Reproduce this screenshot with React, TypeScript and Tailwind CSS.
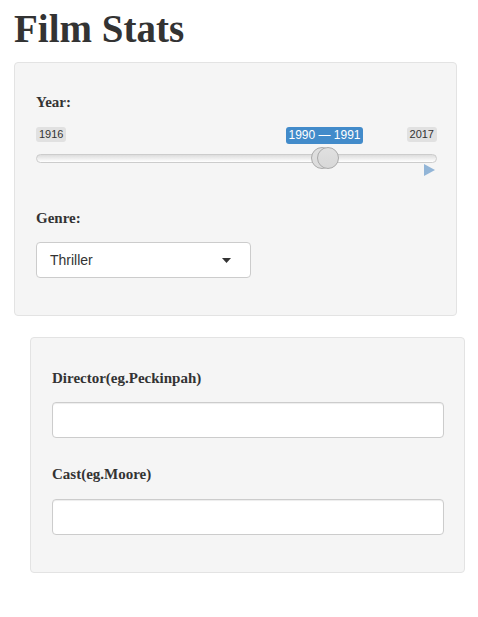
import React from "react";

const serif = "font-['Liberation_Serif',_'Times_New_Roman',_serif]";
const sans = "font-['Liberation_Sans',_Arial,_sans-serif]";

function YearSlider() {
    return (
        <div className={`relative h-[50px] w-full ${sans}`}>
            {/* min / max */}
            <span className="absolute left-0 top-0 rounded-[3px] bg-[#e1e1e1] px-[3px] py-[1px] text-[11px] leading-[13px] text-[#333]">
                1916
            </span>
            <span className="absolute right-0 top-0 rounded-[3px] bg-[#e1e1e1] px-[3px] py-[1px] text-[11px] leading-[13px] text-[#333]">
                2017
            </span>

            {/* range value */}
            <span className="absolute left-[250px] top-0 w-[77px] rounded-[3px] bg-[#428bca] py-[1px] text-center text-[12px] leading-[15px] text-white">
                1990 — 1991
            </span>

            {/* track */}
            <div className="absolute left-0 right-0 top-[27px] h-[9px] rounded-full border border-[#cccccc] bg-gradient-to-b from-[#dddddd] to-[#ffffff]" />

            {/* handles */}
            <div className="absolute left-[275px] top-[20px] h-[22px] w-[22px] rounded-full border border-[#aaaaaa] bg-gradient-to-b from-[#dfdfdf] to-[#dcdcdc]" />
            <div className="absolute left-[281px] top-[20px] h-[22px] w-[22px] rounded-full border border-[#aaaaaa] bg-gradient-to-b from-[#e0e0e0] to-[#d8d8d8]" />

            {/* play button */}
            <svg
                className="absolute right-[2px] top-[37px]"
                width="11"
                height="12"
                viewBox="0 0 11 12"
            >
                <polygon points="0,0 11,6 0,12" fill="#92b5d7" />
            </svg>
        </div>
    );
}

export default function App() {
    return (
        <div className="w-[478px] bg-white pb-[45px] text-[#333]">
            <h1 className={`${serif} ml-[14px] pt-[8px] text-[39px] font-bold leading-[42px] text-[#333]`}>
                Film Stats
            </h1>

            {/* Year + genre */}
            <div className="ml-[14px] mt-[12px] w-[443px] rounded-[4px] border border-[#e3e3e3] bg-[#f5f5f5] pb-[37px] pl-[21px] pr-[19px] pt-[29px]">
                <label className={`${serif} block text-[15px] font-bold leading-[20px]`}>Year:</label>
                <div className="mt-[15px]">
                    <YearSlider />
                </div>

                <label className={`${serif} mt-[31px] block text-[15px] font-bold leading-[20px]`}>Genre:</label>
                <div className={`${sans} mt-[14px] flex h-[36px] w-[215px] items-center justify-between rounded-[4px] border border-[#cccccc] bg-white pl-[13px] pr-[19px] text-[14px] text-[#333]`}>
                    <span>Thriller</span>
                    <svg width="9" height="5" viewBox="0 0 9 5">
                        <polygon points="0,0 9,0 4.5,5" fill="#333" />
                    </svg>
                </div>
            </div>

            {/* Director + cast */}
            <div className="ml-[30px] mt-[21px] w-[435px] rounded-[4px] border border-[#e3e3e3] bg-[#f5f5f5] pb-[37px] pl-[21px] pr-[20px] pt-[30px]">
                <label className={`${serif} block text-[15px] font-bold leading-[20px]`}>Director(eg.Peckinpah)</label>
                <input
                    type="text"
                    className="mt-[14px] block h-[36px] w-full rounded-[4px] border border-[#cccccc] bg-white px-3 shadow-[inset_0_1px_1px_rgba(0,0,0,0.075)] outline-none"
                />

                <label className={`${serif} mt-[26px] block text-[15px] font-bold leading-[20px]`}>Cast(eg.Moore)</label>
                <input
                    type="text"
                    className="mt-[15px] block h-[36px] w-full rounded-[4px] border border-[#cccccc] bg-white px-3 shadow-[inset_0_1px_1px_rgba(0,0,0,0.075)] outline-none"
                />
            </div>
        </div>
    );
}
